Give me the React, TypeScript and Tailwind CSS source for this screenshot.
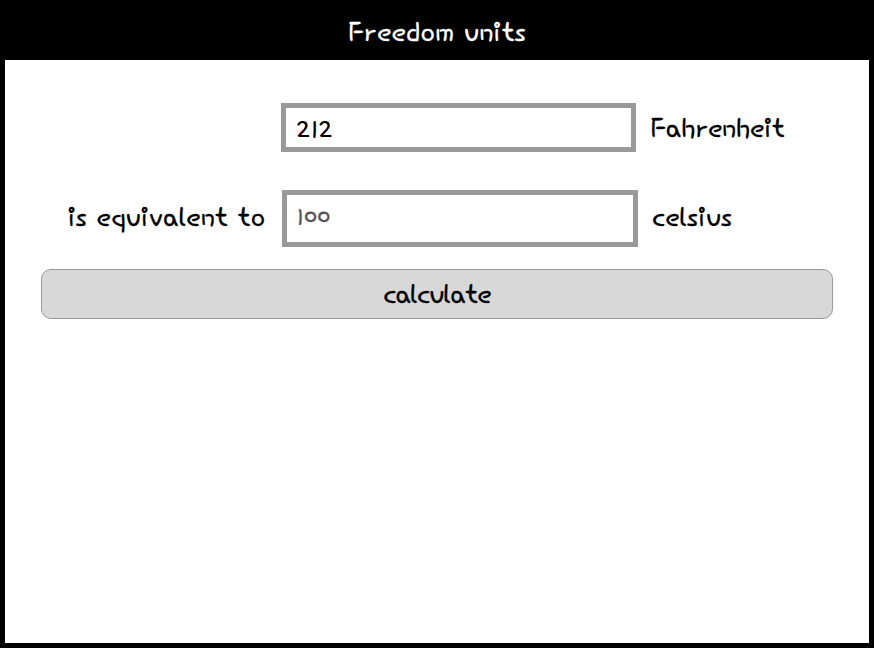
const label = "whitespace-nowrap text-black";
const field = "flex items-center border-[5px] border-[#999]";

export default function App() {
  return (
    <main className="flex h-[648px] w-[874px] flex-col overflow-hidden bg-black px-[5px] pb-[5px] font-['Hi_Melody','Comic_Neue',cursive] text-[38px] leading-[30px] [-webkit-text-stroke:0.3px_currentColor]">
      <header className="flex h-[60px] shrink-0 items-center justify-center pt-[9px] text-white">
        <h1 className="tracking-[0.2px]">Freedom units</h1>
      </header>
      <section className="flex flex-1 flex-col bg-white px-9 pt-[43px]">
        <div className="ml-[240px] flex items-center gap-[14px]">
          <div className={field + " h-[49px] w-[355px] px-[10px] font-['Gamja_Flower'] text-[32px] [-webkit-text-stroke:0]"}>212</div>
          <span className={label + " pt-[7px] tracking-[-0.2px]"}>Fahrenheit</span>
        </div>
        <div className="mt-[38px] flex items-center">
          <span className={label + " w-[241px] pl-[27px] pt-0.5"}>is equivalent to</span>
          <div className={field + " h-[57px] w-[356px] px-[10px] pt-[3px] text-[32px] text-[#555]"}>100</div>
          <span className={label + " ml-[14px] pt-0.5"}>celsius</span>
        </div>
        <button className="mt-[22px] h-[50px] w-[792px] rounded-[10px] border border-[#999] bg-[#d8d8d8] pt-[5px] tracking-[-0.9px]">calculate</button>
      </section>
    </main>
  );
}
